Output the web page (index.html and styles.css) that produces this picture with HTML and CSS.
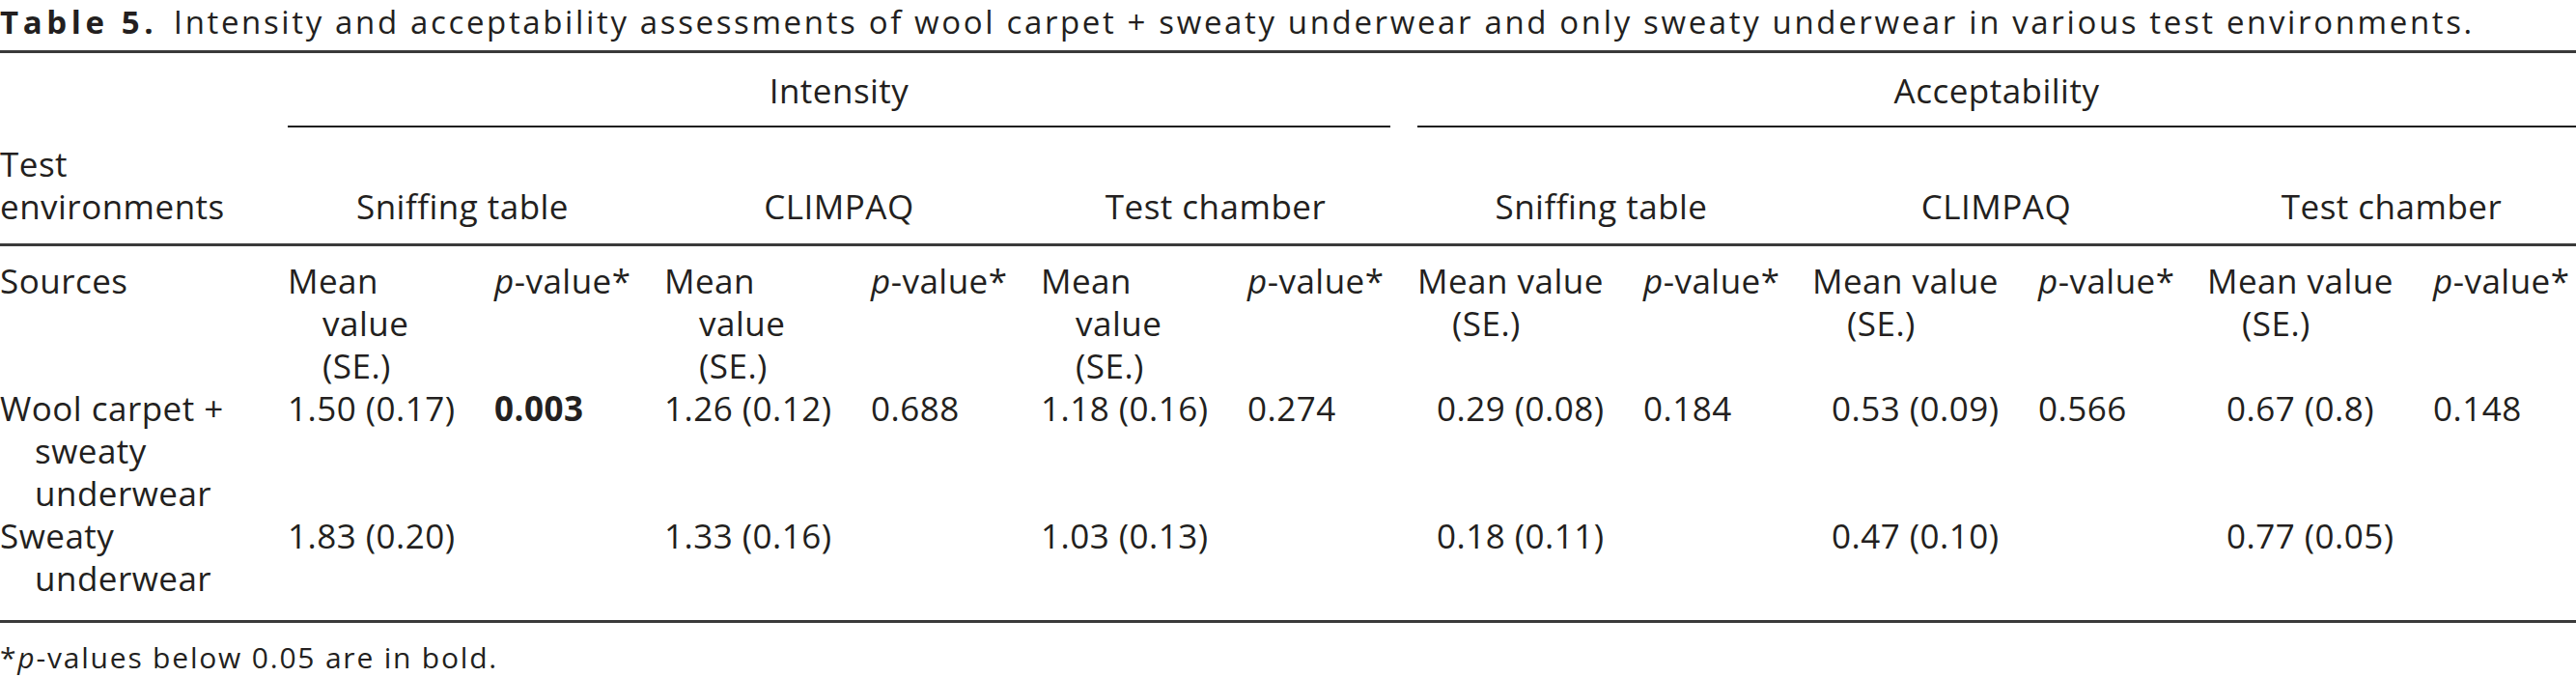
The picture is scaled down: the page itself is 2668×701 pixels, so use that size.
FILE: index.html
```html
<!DOCTYPE html>
<html lang="en">
<head>
    <meta charset="UTF-8">
    <meta name="viewport" content="width=device-width, initial-scale=1.0">
    <title>Table 5</title>
    <link rel="stylesheet" href="styles.css">
</head>
<body>
    <h1 class="caption"><b class="label">Table 5.</b>Intensity and acceptability assessments of wool carpet + sweaty underwear and only sweaty underwear in various test environments.</h1>

    <table class="results">
        <colgroup>
            <col class="c-stub">
            <col class="c-im"><col class="c-ip">
            <col class="c-im"><col class="c-ip">
            <col class="c-im"><col class="c-ip">
            <col class="c-am"><col class="c-ap">
            <col class="c-am"><col class="c-ap">
            <col class="c-am"><col>
        </colgroup>
        <thead>
            <tr class="group-row">
                <th></th>
                <th colspan="6"><div class="group-label">Intensity</div></th>
                <th colspan="6" class="last"><div class="group-label">Acceptability</div></th>
            </tr>
            <tr class="env-row">
                <th class="stub">Test<br>environments</th>
                <th colspan="2" class="env">Sniffing table</th>
                <th colspan="2" class="env">CLIMPAQ</th>
                <th colspan="2" class="env">Test chamber</th>
                <th colspan="2" class="env">Sniffing table</th>
                <th colspan="2" class="env">CLIMPAQ</th>
                <th colspan="2" class="env last">Test chamber</th>
            </tr>
            <tr class="head-row">
                <th class="stub">Sources</th>
                <th class="hang">Mean<br>value<br>(SE.)</th>
                <th><i>p</i>-value*</th>
                <th class="hang">Mean<br>value<br>(SE.)</th>
                <th><i>p</i>-value*</th>
                <th class="hang">Mean<br>value<br>(SE.)</th>
                <th><i>p</i>-value*</th>
                <th class="hang">Mean value<br>(SE.)</th>
                <th><i>p</i>-value*</th>
                <th class="hang">Mean value<br>(SE.)</th>
                <th><i>p</i>-value*</th>
                <th class="hang">Mean value<br>(SE.)</th>
                <th class="last"><i>p</i>-value*</th>
            </tr>
        </thead>
        <tbody>
            <tr>
                <td class="hang">Wool carpet +<br>sweaty<br>underwear</td>
                <td>1.50 (0.17)</td>
                <td class="sig">0.003</td>
                <td>1.26 (0.12)</td>
                <td>0.688</td>
                <td>1.18 (0.16)</td>
                <td>0.274</td>
                <td class="acc-val">0.29 (0.08)</td>
                <td>0.184</td>
                <td class="acc-val">0.53 (0.09)</td>
                <td>0.566</td>
                <td class="acc-val">0.67 (0.8)</td>
                <td class="last">0.148</td>
            </tr>
            <tr class="end-row">
                <td class="hang">Sweaty<br>underwear</td>
                <td>1.83 (0.20)</td>
                <td></td>
                <td>1.33 (0.16)</td>
                <td></td>
                <td>1.03 (0.13)</td>
                <td></td>
                <td class="acc-val">0.18 (0.11)</td>
                <td></td>
                <td class="acc-val">0.47 (0.10)</td>
                <td></td>
                <td class="acc-val">0.77 (0.05)</td>
                <td class="last"></td>
            </tr>
        </tbody>
    </table>

    <p class="note">*<i>p</i>-values below 0.05 are in bold.</p>
</body>
</html>
```

FILE: styles.css
```css
body {
    margin: 0;
    font-family: "Open Sans", "Liberation Sans", Arial, sans-serif;
    color: #231f20;
    background: #fff;
    letter-spacing: 0.03em;
}
.caption {
    margin: 0;
    font-size: 33px;
    font-weight: normal;
    line-height: 46px;
    letter-spacing: 0.08em;
    white-space: nowrap;
}
.caption .label {
    font-weight: bold;
    letter-spacing: 0.14em;
    margin-right: 0.5em;
}
.results {
    width: 2668px;
    table-layout: fixed;
    border-collapse: separate;
    border-spacing: 0;
    margin-top: 6px;
    border-top: 3px solid #3a3a3a;
    border-bottom: 3px solid #3a3a3a;
    font-size: 35px;
    line-height: 44px;
}
.c-stub { width: 298px; }
.c-im { width: 214px; }
.c-ip { width: 176px; }
.c-am { width: 234px; }
.c-ap { width: 175px; }
.results th,
.results td {
    padding: 0 28px 0 0;
    text-align: left;
    vertical-align: top;
    font-weight: normal;
    white-space: nowrap;
}
.results .last {
    padding-right: 0;
}
.group-row th {
    padding-top: 17px;
}
.group-label {
    text-align: center;
    padding-bottom: 14px;
    border-bottom: 2px solid #1f1f1f;
}
.env-row th {
    padding-top: 16px;
    padding-bottom: 16px;
    border-bottom: 3px solid #3a3a3a;
    vertical-align: bottom;
}
.results .env {
    text-align: center;
}
.head-row th {
    padding-top: 14px;
}
.results .hang {
    padding-left: 36px;
    text-indent: -36px;
}
.results .acc-val {
    padding-left: 20px;
}
.results .sig {
    font-weight: bold;
}
.end-row td {
    padding-bottom: 21px;
}
.note {
    margin: 18px 0 0;
    font-size: 30px;
    line-height: 36px;
    letter-spacing: 0.06em;
}
```
